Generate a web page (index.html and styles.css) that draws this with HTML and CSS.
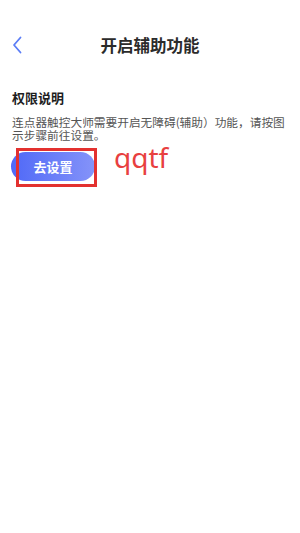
FILE: index.html
```html
<!DOCTYPE html>
<html lang="zh-CN">
<head>
<meta charset="utf-8">
<title>开启辅助功能</title>
<link rel="stylesheet" href="styles.css">
</head>
<body>
<header class="nav">
  <div class="nav-left">
    <svg class="back" width="10" height="18" viewBox="0 0 10 18" aria-hidden="true">
      <path d="M8.5 1.5 L2 9 L8.5 16.5" fill="none" stroke="#5b7df6" stroke-width="1.8" stroke-linecap="round" stroke-linejoin="round"/>
    </svg>
  </div>
  <h1 class="nav-title">开启辅助功能</h1>
  <div class="nav-right"></div>
</header>
<main class="content">
  <h2 class="sec-title">权限说明</h2>
  <p class="desc">连点器触控大师需要开启无障碍(辅助）功能，请按图示步骤前往设置。</p>
  <div class="action">
    <button class="btn">去设置</button>
    <div class="mark-box"></div>
    <span class="mark-text">qqtf</span>
  </div>
</main>
</body>
</html>
```

FILE: styles.css
```css
html, body {
  margin: 0;
  padding: 0;
  background: #ffffff;
}
body {
  width: 300px;
  height: 533px;
  font-family: "Noto Sans CJK SC", "Noto Sans", sans-serif;
  color: #222;
}
.nav {
  margin-top: 20px;
  height: 50px;
  display: grid;
  grid-template-columns: 1fr auto 1fr;
  align-items: center;
}
.nav-left {
  display: flex;
  align-items: center;
  padding-left: 12px;
}
.back {
  display: block;
}
.nav-title {
  margin: 0;
  font-size: 16.5px;
  line-height: 20px;
  font-weight: 700;
  color: #2b2b2b;
}
.content {
  padding: 0 12px;
}
.sec-title {
  margin: 19px 0 0;
  font-size: 13px;
  line-height: 18px;
  font-weight: 700;
  color: #1e1e1e;
}
.desc {
  margin: 9px 0 0;
  font-size: 11.7px;
  line-height: 12.5px;
  color: #555;
}
.action {
  position: relative;
  margin-top: 11px;
  margin-left: -1px;
  width: 84px;
  height: 29px;
}
.btn {
  display: block;
  width: 84px;
  height: 29px;
  border: 0;
  border-radius: 15px;
  padding: 0;
  background: linear-gradient(90deg, #5069f7 0%, #6f82f8 60%, #8593f9 100%);
  color: #fff;
  font-family: "Noto Sans CJK SC", sans-serif;
  font-size: 13px;
  font-weight: 700;
  line-height: 29px;
}
.mark-box {
  position: absolute;
  left: 5px;
  top: -4px;
  width: 81px;
  height: 39px;
  box-sizing: border-box;
  border: 3px solid #e3312f;
}
.mark-text {
  position: absolute;
  left: 103px;
  top: -9px;
  font-family: "Noto Sans", sans-serif;
  font-size: 28px;
  line-height: 28px;
  color: #e8403f;
  white-space: nowrap;
}
```
